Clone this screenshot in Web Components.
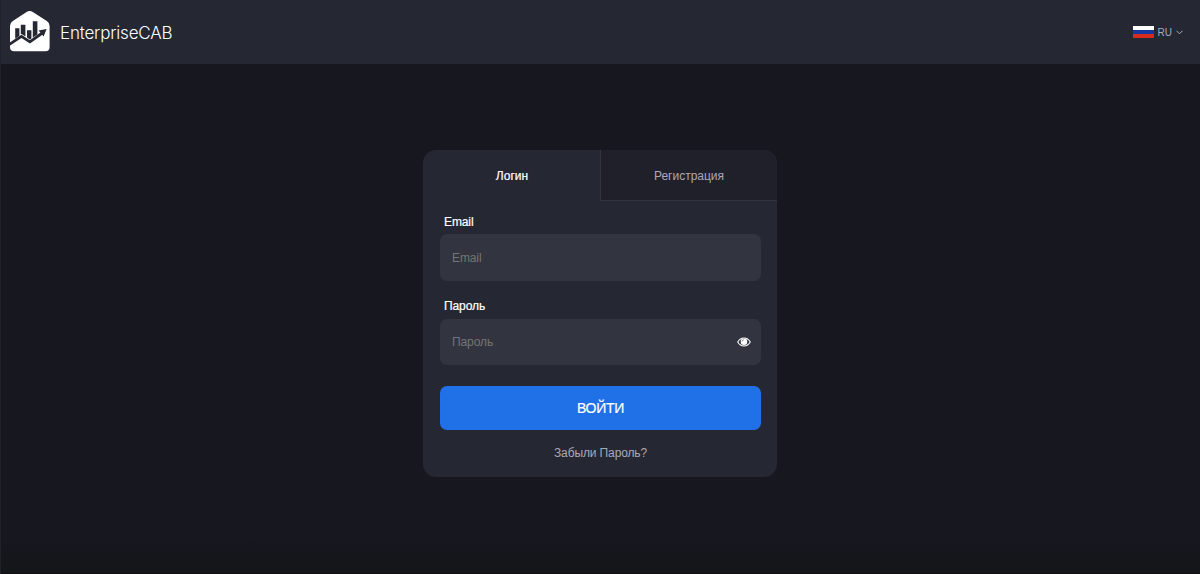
<!DOCTYPE html>
<html lang="ru">
<head>
  <meta charset="utf-8">
  <title>EnterpriseCAB</title>
  <style>
    body {
      --panel: #252733;
      --page: #16171f;
      --field: #32343f;
      --line: #303341;
      --muted: #a9aab8;
      --white: #fff;
      --blue: #2070e8;
      margin: 0;
      height: 100vh;
      overflow: hidden;
      background: linear-gradient(transparent 540px, #151619 572px, #100f12 574px) var(--page);
      font: 12px/16px "Liberation Sans", Arial, sans-serif;
      color: var(--white);
    }
  </style>
</head>
<body>
  <login-page>
    <site-header slot="header">
      <brand-logo slot="brand">EnterpriseCAB</brand-logo>
      <lang-select>RU</lang-select>
    </site-header>
    <auth-card>
      <auth-tab slot="tabs" active>Логин</auth-tab>
      <auth-tab slot="tabs">Регистрация</auth-tab>
      <form-field label="Email" type="email"></form-field>
      <form-field label="Пароль" type="password"></form-field>
      <submit-button>ВОЙТИ</submit-button>
      <forgot-link>Забыли Пароль?</forgot-link>
    </auth-card>
  </login-page>

  <script>
    class BaseElement extends HTMLElement {
      constructor() {
        super();
        this.attachShadow({ mode: 'open' });
      }

      connectedCallback() {
        const template = document.createElement('template');
        template.innerHTML = this.getTemplate();
        this.shadowRoot.replaceChildren(template.content.cloneNode(true));
      }
    }

    class LoginPage extends BaseElement {
      getTemplate() {
        return `
          <slot name="header"></slot>
          <main><slot></slot></main>
          <style>
            :host {
              display: flex;
              flex-direction: column;
              box-sizing: border-box;
              height: 100%;
              border-left: 1px solid #20222a;
            }
            main {
              display: flex;
              flex: 1;
              justify-content: center;
              align-items: flex-start;
              padding: 86px 1px 0 0;
            }
          </style>
        `;
      }
    }

    class SiteHeader extends BaseElement {
      getTemplate() {
        return `
          <header>
            <slot name="brand"></slot>
            <slot></slot>
          </header>
          <style>
            :host { display: block; }
            header {
              display: flex;
              justify-content: space-between;
              align-items: center;
              box-sizing: border-box;
              height: 64px;
              padding: 0 17px 0 8px;
              background: var(--panel);
            }
          </style>
        `;
      }
    }

    class BrandLogo extends BaseElement {
      getTemplate() {
        return `
          <svg width="42" height="42" viewBox="0 0 42 42">
            <path fill="#fff" d="M17.6 2.1Q20.7 .1 23.8 2.1L37.8 11Q40.6 12.8 40.6 16V37Q40.6 41.3 36.3 41.3H5.3Q1 41.3 1 37V16Q1 12.8 3.8 11Z"/>
            <path fill="#252733" d="M6.2 18.2H10.4V26L6.2 28.8ZM11.8 14.8H16.4V26.4L12.6 23.9L11.8 24.4ZM18 20.3H22.4V28.5L20.8 29.5L18 27.6ZM23.8 11.3H28.4V24.4L23.8 27.6Z"/>
            <path fill="none" stroke="#252733" stroke-width="2.8" d="M0 34.6L12.5 26.4L20.9 31.9L34 22.5"/>
            <path fill="#252733" d="M29.6 20.6L37.6 19L34.6 26.6Z"/>
          </svg>
          <span><slot></slot></span>
          <style>
            :host {
              display: flex;
              align-items: center;
              gap: 9px;
              font: 300 17px/24px Inter, sans-serif;
              letter-spacing: -.2px;
            }
            svg { display: block; margin-top: -3px; }
            span { padding-top: 2px; }
          </style>
        `;
      }
    }

    class LangSelect extends BaseElement {
      getTemplate() {
        return `
          <svg width="21" height="12" viewBox="0 0 21 12">
            <path fill="#fff" d="M0 0H21V4H0Z"/>
            <path fill="#1438a0" d="M0 4H21V8H0Z"/>
            <path fill="#d92a20" d="M0 8H21V12H0Z"/>
          </svg>
          <span><slot></slot></span>
          <svg class="arrow" width="7" height="5" viewBox="0 0 7 5">
            <path fill="none" stroke="#a9aab8" d="M.5 .8L3.5 3.8L6.5 .8"/>
          </svg>
          <style>
            :host {
              display: flex;
              align-items: center;
              color: var(--muted);
              font-size: 10px;
              line-height: 14px;
            }
            span { margin: 2px 4px 0; }
            svg { display: block; }
          </style>
        `;
      }
    }

    class AuthCard extends BaseElement {
      getTemplate() {
        return `
          <nav><slot name="tabs"></slot></nav>
          <section><slot></slot></section>
          <style>
            :host {
              display: block;
              width: 354px;
              height: 327px;
              overflow: hidden;
              border-radius: 13px;
              background: var(--panel);
            }
            nav { display: flex; height: 51px; }
            section {
              display: flex;
              flex-direction: column;
              padding: 13px 16px 0 17px;
            }
          </style>
        `;
      }
    }

    class AuthTab extends BaseElement {
      getTemplate() {
        return `
          <slot></slot>
          <style>
            :host {
              display: flex;
              flex: 1;
              justify-content: center;
              align-items: center;
              box-sizing: border-box;
              padding-top: 1px;
              border: solid var(--line);
              border-width: 0 0 1px 1px;
              background: #20202a;
              color: var(--muted);
            }
            :host([active]) {
              border-color: transparent;
              background: none;
              color: var(--white);
              -webkit-text-stroke: .2px;
            }
          </style>
        `;
      }
    }

    class FormField extends BaseElement {
      getTemplate() {
        const label = this.getAttribute('label');
        const type = this.getAttribute('type');
        return `
          <label for="input">${label}</label>
          <div>
            <input id="input" type="${type}" placeholder="${label}">
            ${type === 'password' ? '<eye-icon></eye-icon>' : ''}
          </div>
          <style>
            :host { display: block; height: 84.4px; }
            label {
              display: block;
              padding: 0 4px 4.4px;
              letter-spacing: -.1px;
              -webkit-text-stroke: .2px;
            }
            div {
              display: flex;
              align-items: center;
              box-sizing: border-box;
              height: 46.5px;
              padding: 0 10px 0 12px;
              border-radius: 7px;
              background: var(--field);
            }
            input {
              flex: 1;
              min-width: 0;
              padding: 0;
              border: 0;
              outline: 0;
              background: none;
              color: var(--white);
              font: inherit;
              letter-spacing: -.1px;
            }
            input::placeholder { color: #757575; }
          </style>
        `;
      }
    }

    class EyeIcon extends BaseElement {
      getTemplate() {
        return `
          <svg width="14" height="10" viewBox="0 0 14 10">
            <path fill="none" stroke="#fff" stroke-width="1.1" d="M.7 5Q3 1 7 1T13.3 5Q11 9 7 9T.7 5Z"/>
            <circle cx="7" cy="4.7" r="3.3" fill="#fff"/>
            <path fill="none" stroke="#32343f" stroke-width=".6" d="M5.1 4.4Q5.3 3 6.8 2.8"/>
          </svg>
          <style>
            :host { display: block; }
            svg { display: block; margin-top: -1px; }
          </style>
        `;
      }
    }

    class SubmitButton extends BaseElement {
      getTemplate() {
        return `
          <button type="submit"><slot></slot></button>
          <style>
            :host { display: block; margin-top: 3.5px; }
            button {
              display: block;
              width: 100%;
              height: 43.5px;
              padding: 0 0 1px;
              border: 0;
              border-radius: 7px;
              background: var(--blue);
              color: var(--white);
              font: 14px/20px "Liberation Sans", Arial, sans-serif;
              letter-spacing: -.3px;
              -webkit-text-stroke: .2px;
            }
          </style>
        `;
      }
    }

    class ForgotLink extends BaseElement {
      getTemplate() {
        return `
          <slot></slot>
          <style>
            :host {
              display: block;
              margin-top: 15px;
              text-align: center;
              color: var(--muted);
              letter-spacing: -.12px;
            }
          </style>
        `;
      }
    }

    customElements.define('login-page', LoginPage);
    customElements.define('site-header', SiteHeader);
    customElements.define('brand-logo', BrandLogo);
    customElements.define('lang-select', LangSelect);
    customElements.define('auth-card', AuthCard);
    customElements.define('auth-tab', AuthTab);
    customElements.define('form-field', FormField);
    customElements.define('eye-icon', EyeIcon);
    customElements.define('submit-button', SubmitButton);
    customElements.define('forgot-link', ForgotLink);
  </script>
</body>
</html>
